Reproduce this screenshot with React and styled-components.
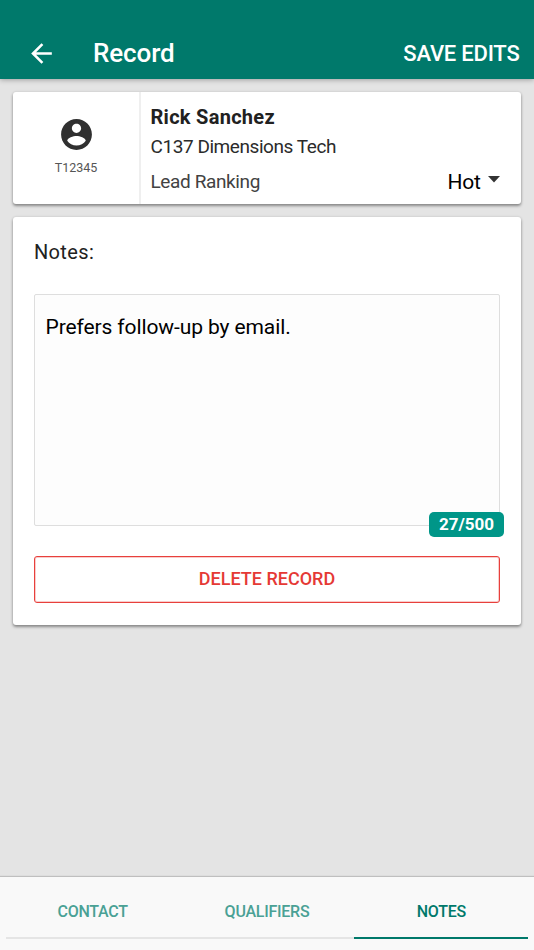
import React, { useState } from "react";
import styled, { createGlobalStyle } from "styled-components";

const GlobalStyle = createGlobalStyle`
  * { box-sizing: border-box; }
  html, body { margin: 0; padding: 0; }
  body { font-family: Roboto, sans-serif; background: #e4e4e4; color: #212121; }
  button, textarea { font-family: inherit; margin: 0; }
`;

const Screen = styled.div`
  display: flex;
  flex-direction: column;
  height: 950px;
  width: 534px;
  overflow: hidden;
  background: #e4e4e4;
`;

const AppBar = styled.header`
  display: flex;
  align-items: center;
  flex: none;
  height: 79px;
  padding: 27px 14.5px 0 26px;
  background: #00796b;
  color: #fff;
  box-shadow: 0 1px 5px rgba(0, 0, 0, 0.3);
`;

const IconButton = styled.button`
  display: flex;
  padding: 0;
  border: 0;
  background: none;
  color: inherit;
`;

const Title = styled.h1`
  flex: 1;
  margin: 0 0 0 36px;
  font-size: 26px;
  line-height: 30px;
  font-weight: 500;
  letter-spacing: -0.1px;
`;

const BarAction = styled.button`
  padding: 2px 0 0;
  border: 0;
  background: none;
  color: inherit;
  font-size: 22px;
  line-height: 28px;
  font-weight: 500;
  letter-spacing: -0.22px;
`;

const Content = styled.main`
  display: flex;
  flex-direction: column;
  flex: 1;
  gap: 13px;
  padding: 13px;
`;

const Card = styled.section`
  background: #fff;
  border-radius: 3px;
  box-shadow: 0 2px 3px rgba(0, 0, 0, 0.38), 0 0 3px rgba(0, 0, 0, 0.12);
`;

const PersonCard = styled(Card)`
  display: flex;
  height: 112px;
`;

const Identity = styled.div`
  display: flex;
  flex-direction: column;
  align-items: center;
  width: 128px;
  padding: 24px 0 0;
  border-right: 2px solid #efefef;
  color: #303030;
`;

const Badge = styled.span`
  margin-top: 6px;
  font-size: 12.5px;
  line-height: 18px;
  color: #555;
`;

const Details = styled.div`
  flex: 1;
  padding: 11px 21px 0 9.5px;
`;

const Name = styled.h2`
  margin: 0;
  font-size: 20px;
  line-height: 28px;
  font-weight: 700;
  letter-spacing: 0.28px;
`;

const Company = styled.div`
  padding-top: 1px;
  font-size: 19px;
  line-height: 29px;
  letter-spacing: -0.44px;
  color: #2b2b2b;
`;

const RankRow = styled.div`
  display: flex;
  align-items: center;
  justify-content: space-between;
  height: 41px;
`;

const RankLabel = styled.span`
  font-size: 19px;
  line-height: 28px;
  letter-spacing: -0.38px;
  color: #424242;
`;

const RankValue = styled.span`
  display: flex;
  align-items: center;
  gap: 7.5px;
  font-size: 21px;
  line-height: 28px;
  letter-spacing: -0.3px;
  color: #000;
`;

const Caret = styled.svg`
  margin-bottom: 5px;
`;

const NotesCard = styled(Card)`
  display: flex;
  flex-direction: column;
  height: 408px;
  padding: 21px 21px 0;
`;

const NotesLabel = styled.label`
  font-size: 20px;
  line-height: 28px;
  letter-spacing: 0.35px;
`;

const NotesField = styled.div`
  position: relative;
  height: 232px;
  margin-top: 28px;
`;

const NotesInput = styled.textarea`
  display: block;
  width: 100%;
  height: 100%;
  padding: 18px 10.5px;
  border: 1px solid #dedede;
  border-radius: 2px;
  background: #fdfdfd;
  color: #000;
  font-size: 21px;
  line-height: 28px;
  letter-spacing: -0.1px;
  resize: none;
  outline: none;
`;

const Counter = styled.span`
  position: absolute;
  right: -4px;
  bottom: -11px;
  width: 75px;
  height: 25px;
  border-radius: 5px;
  background: #009688;
  color: #fff;
  font-size: 17px;
  line-height: 25px;
  font-weight: 700;
  text-align: center;
`;

const DeleteButton = styled.button`
  height: 47px;
  margin-top: 30px;
  padding: 0 0 2px;
  border: 1px solid #e8403c;
  border-radius: 3px;
  background: #fff;
  box-shadow: inset 0 0 0 1px rgba(229, 57, 53, 0.25);
  color: #e53935;
  font-size: 18px;
  font-weight: 500;
`;

const Tabs = styled.nav`
  display: grid;
  grid-template-columns: repeat(3, 1fr);
  flex: none;
  height: 73px;
  padding: 0 5.5px 11px;
  background: #f9f9f9;
  box-shadow: 0 -1px 1px rgba(0, 0, 0, 0.16);
`;

const Tab = styled.button`
  padding: 8px 0 0;
  border: 0;
  border-bottom: 2px solid ${(p) => (p.$active ? "#00796b" : "#e5e5e5")};
  background: none;
  color: ${(p) => (p.$active ? "#00796b" : "#4aa195")};
  font-size: 16px;
  font-weight: 500;
  letter-spacing: -0.25px;
`;

const TABS = ["CONTACT", "QUALIFIERS", "NOTES"];

export default function App() {
  const [note, setNote] = useState("Prefers follow-up by email.");
  const [tab, setTab] = useState("NOTES");

  return (
    <>
      <GlobalStyle />
      <Screen>
        <AppBar>
          <IconButton aria-label="Back">
            <svg width="31" height="31" viewBox="0 0 24 24" fill="currentColor">
              <path d="M20 11H7.83l5.59-5.59L12 4l-8 8 8 8 1.41-1.41L7.83 13H20v-2z" />
            </svg>
          </IconButton>
          <Title>Record</Title>
          <BarAction>SAVE EDITS</BarAction>
        </AppBar>
        <Content>
          <PersonCard>
            <Identity>
              <svg width="37" height="37" viewBox="0 0 24 24" fill="currentColor">
                <path d="M12 2C6.48 2 2 6.48 2 12s4.48 10 10 10 10-4.48 10-10S17.52 2 12 2zm0 3c1.66 0 3 1.34 3 3s-1.34 3-3 3-3-1.34-3-3 1.34-3 3-3zm0 14.2c-2.5 0-4.71-1.28-6-3.22.03-1.99 4-3.08 6-3.08 1.99 0 5.97 1.09 6 3.08-1.29 1.94-3.5 3.22-6 3.22z" />
              </svg>
              <Badge>T12345</Badge>
            </Identity>
            <Details>
              <Name>Rick Sanchez</Name>
              <Company>C137 Dimensions Tech</Company>
              <RankRow>
                <RankLabel>Lead Ranking</RankLabel>
                <RankValue>
                  Hot
                  <Caret width="12" height="7" viewBox="0 0 12 7">
                    <path d="M0 0h12L6 6.5z" fill="#333" />
                  </Caret>
                </RankValue>
              </RankRow>
            </Details>
          </PersonCard>
          <NotesCard>
            <NotesLabel htmlFor="notes">Notes:</NotesLabel>
            <NotesField>
              <NotesInput
                id="notes"
                spellCheck={false}
                value={note}
                maxLength={500}
                onChange={(e) => setNote(e.target.value)}
              />
              <Counter>{note.length}/500</Counter>
            </NotesField>
            <DeleteButton>DELETE RECORD</DeleteButton>
          </NotesCard>
        </Content>
        <Tabs>
          {TABS.map((name) => (
            <Tab key={name} $active={name === tab} onClick={() => setTab(name)}>
              {name}
            </Tab>
          ))}
        </Tabs>
      </Screen>
    </>
  );
}
